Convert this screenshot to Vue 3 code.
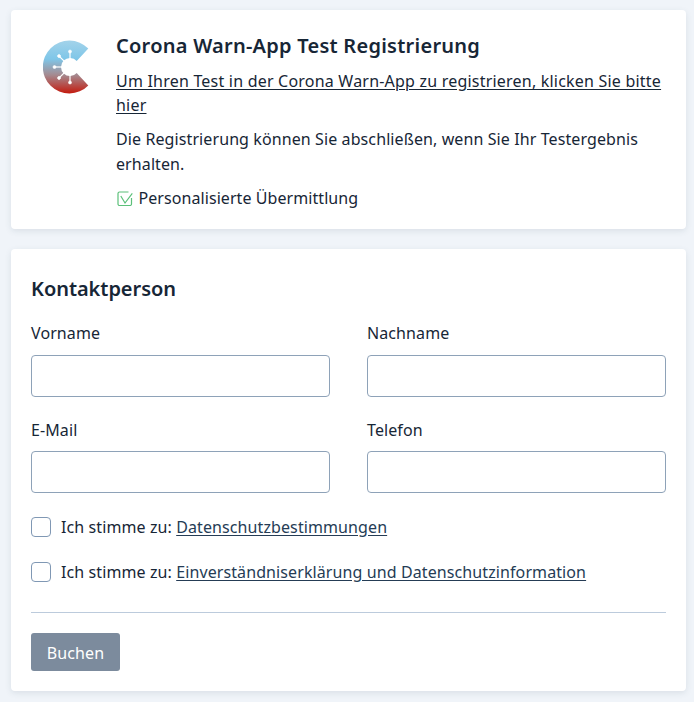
<script setup>
const fields = [
  { label: 'Vorname', id: 'vorname' },
  { label: 'Nachname', id: 'nachname' },
  { label: 'E-Mail', id: 'email' },
  { label: 'Telefon', id: 'telefon' },
]
const consents = ['Datenschutzbestimmungen', 'Einverständniserklärung und Datenschutzinformation']
const spokes = [90, 135, 180, 225, 270]
</script>

<template>
  <main class="page">
    <section class="card intro">
      <svg class="logo" width="46" height="54" viewBox="0 0 46 54">
        <defs>
          <linearGradient id="cw" x1="0" y1="0" x2="0" y2="1">
            <stop offset="0" stop-color="#a3d3ea" />
            <stop offset="0.35" stop-color="#7fc6e8" />
            <stop offset="0.65" stop-color="#a58a90" />
            <stop offset="1" stop-color="#c41a0e" />
          </linearGradient>
        </defs>
        <path fill="url(#cw)" d="M45.300 8.500 A26.500 26.500 0 1 0 45.300 45.500 L33.700 33 A9 9 0 1 1 33.700 21 Z" />
        <g v-for="a in spokes" :key="a" :transform="`rotate(${a} 27 27)`" fill="#fff" stroke="#fff">
          <line x1="27" y1="27" x2="42" y2="27" stroke-width="1.2" />
          <circle cx="42.500" cy="27" r="1.500" stroke-width="0.6" />
        </g>
      </svg>
      <div class="intro-text">
        <h1>Corona Warn-App Test Registrierung</h1>
        <p class="line"><a href="#">Um Ihren Test in der Corona Warn-App zu registrieren, klicken Sie bitte hier</a></p>
        <p class="line">Die Registrierung können Sie abschließen, wenn Sie Ihr Testergebnis erhalten.</p>
        <p class="check">
          <svg width="17" height="16" viewBox="0 0 17 16" fill="none" stroke="#5cc07a" stroke-width="1.200">
            <path d="M15.500 8V14a1.500 1.500 0 0 1-1.500 1.500H3.500A1.500 1.500 0 0 1 2 14V3.500A1.500 1.500 0 0 1 3.500 2h9" />
            <path d="M4.800 6 9 13 16.300 3.300" />
          </svg>
          Personalisierte Übermittlung
        </p>
      </div>
    </section>

    <section class="card form">
      <h2>Kontaktperson</h2>
      <div class="grid">
        <label v-for="f in fields" :key="f.id" class="field">
          <span>{{ f.label }}</span>
          <input type="text" />
        </label>
      </div>
      <div class="consents">
        <label v-for="c in consents" :key="c" class="consent">
          <span class="box"></span>
          <span>Ich stimme zu: <a href="#">{{ c }}</a></span>
        </label>
      </div>
      <hr />
      <button type="button">Buchen</button>
    </section>
  </main>
</template>

<style>
html, body { margin: 0; background: #f0f4f9; }
</style>

<style scoped>
.page {
  box-sizing: border-box;
  width: 694px;
  height: 702px;
  padding: 10px 8px 0 11px;
  display: flex;
  flex-direction: column;
  gap: 20px;
  font-family: "Noto Sans", sans-serif;
  font-size: 16px;
  line-height: 24.5px;
  letter-spacing: 0.1px;
  color: #172636;
  overflow: hidden;
}
.card {
  background: #fff;
  border-radius: 4px;
  box-shadow: 0 2px 6px rgba(60, 80, 100, 0.12);
}
.intro {
  height: 219px;
  box-sizing: border-box;
  padding: 23px 24px 0 32px;
  display: flex;
  gap: 27px;
}
.logo { flex: none; margin-top: 7px; }
.intro-text { flex: 1; min-width: 0; }
h1 { margin: 0 0 9.600px; font-size: 20px; line-height: 26px; font-weight: 600; letter-spacing: 0.25px; color: #172636; }
.line { margin: 0 0 9.500px; }
a { color: #253c55; text-decoration: underline; text-underline-offset: 2px; }
.line a { color: #172636; letter-spacing: 0.21px; }
.check { margin: 0; display: flex; align-items: center; gap: 5.500px; letter-spacing: 0.07px; }
.form { height: 442px; box-sizing: border-box; padding: 26px 20px 0; }
h2 { margin: 0 0 18.300px; font-size: 20px; line-height: 28px; font-weight: 600; letter-spacing: -0.05px; }
.grid { display: grid; grid-template-columns: 299px 299px; column-gap: 37px; row-gap: 21.100px; }
.field { display: flex; flex-direction: column; gap: 9.300px; }
.field span { line-height: 24px; }
input {
  box-sizing: border-box;
  height: 42px;
  width: 100%;
  border: 1px solid #8ea2b8;
  border-radius: 4px;
  background: #fff;
}
.consents { margin-top: 22px; display: flex; flex-direction: column; gap: 21px; }
.consent { display: flex; align-items: center; gap: 10px; height: 24px; }
.box { width: 20px; height: 20px; box-sizing: border-box; border: 1px solid #8098b4; border-radius: 4px; }
hr { border: 0; border-top: 1px solid #bccbdc; margin: 28px 0 20px; }
button {
  width: 89px;
  height: 38px;
  border: 0;
  border-radius: 3px;
  background: #7c8b9d;
  color: #fff;
  font: inherit;
  letter-spacing: inherit;
  padding: 3px 0 0;
}
</style>
